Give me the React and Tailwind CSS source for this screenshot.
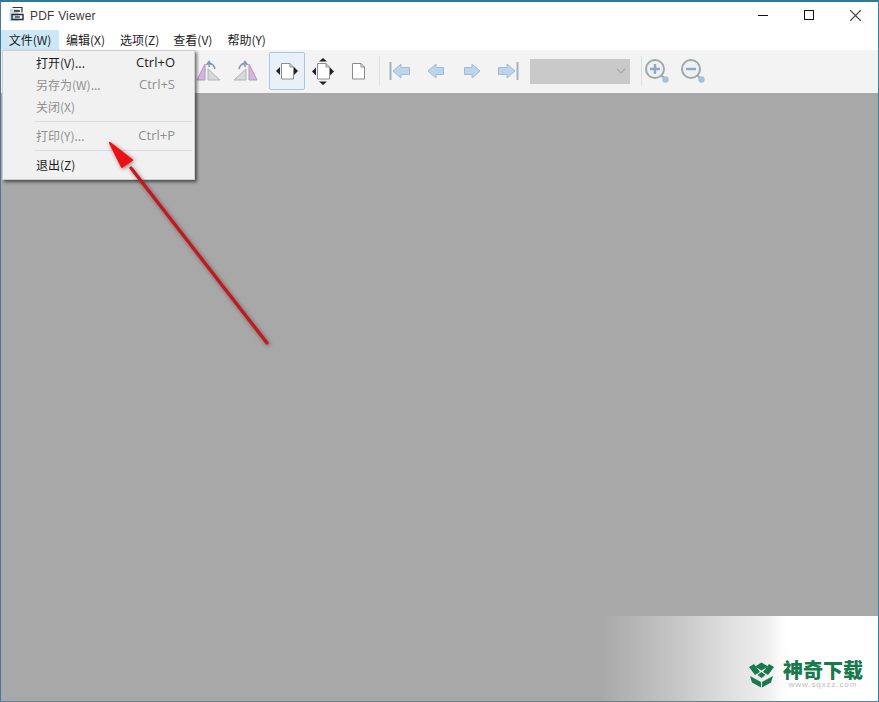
const FONT = "font-['Microsoft_YaHei','Noto_Sans_CJK_SC','Noto_Sans',sans-serif]";

function Sep() {
  return <div className="w-px h-[30px] bg-[#e0e0e0] shrink-0" />;
}

function Btn({ children, active, className = "" }) {
  return (
    <div className={`w-9 h-[38px] shrink-0 flex items-center justify-center rounded-[2px] border ${active ? "border-[#a9c6e4] bg-[#e8f0f8]" : "border-transparent"} ${className}`}>
      {children}
    </div>
  );
}

const Page = ({ x = 0, y = 0 }) => (
  <path d={`M${x + 0.5} ${y + 0.5}h8.5l3.5 3.5v12h-12z M${x + 9} ${y + 0.5}v3.5h3.5`} fill="#fff" stroke="#8c8c8c" strokeWidth="1" />
);

function FlipL() {
  return (
    <svg width="26" height="22" viewBox="0 0 26 22">
      <path d="M1 20 L9 4 V20Z" fill="#d4b6dd" stroke="#b594c4" />
      <path d="M12 20 V9 L24 20Z" fill="#d6d8d8" stroke="#b2b6b6" />
      <path d="M13 7 V3 M10.5 5 L13 1.5 L15.5 5 M13 3 q5 1 6 6" fill="none" stroke="#8498ac" strokeWidth="1.5" />
    </svg>
  );
}
function FlipR() {
  return (
    <svg width="26" height="22" viewBox="0 0 26 22">
      <path d="M25 20 L17 4 V20Z" fill="#d4b6dd" stroke="#b594c4" />
      <path d="M14 20 V9 L2 20Z" fill="#d6d8d8" stroke="#b2b6b6" />
      <path d="M13 7 V3 M10.5 5 L13 1.5 L15.5 5 M13 3 q-5 1 -6 6" fill="none" stroke="#8498ac" strokeWidth="1.5" />
    </svg>
  );
}
function FitW() {
  return (
    <svg width="22" height="18" viewBox="0 0 22 18">
      <g transform="translate(5 1)"><Page /></g>
      <path d="M4 5v8l-4-4zM18 5v8l4-4z" fill="#222" />
    </svg>
  );
}
function FitP() {
  return (
    <svg width="22" height="27" viewBox="0 0 22 27">
      <g transform="translate(5 5)"><Page /></g>
      <path d="M4 9.5v8l-4-4zM18 9.5v8l4-4zM7 3.5h8l-4-3.5zM7 23.5h8l-4 3.5z" fill="#222" />
    </svg>
  );
}
function ArrowNav({ dir }) {
  const flip = dir === "left" ? "" : "scale(-1 1) translate(-22 0)";
  return (
    <svg width="22" height="20" viewBox="0 0 22 20">
      <g transform={flip}>
        <rect x="0.5" y="1" width="2" height="18" fill="#a5b2c4" />
        <path d="M4 10 L12 3 V6.5 H20.5 V13.5 H12 V17Z" fill="#bcd5ee" stroke="#a6b9cf" />
      </g>
    </svg>
  );
}
function Nav({ dir }) {
  const flip = dir === "left" ? "" : "scale(-1 1) translate(-18 0)";
  return (
    <svg width="18" height="18" viewBox="0 0 18 18">
      <g transform={flip}>
        <path d="M1 9 L9 2 V5.5 H16.5 V12.5 H9 V16Z" fill="#bcd5ee" stroke="#a6b9cf" />
      </g>
    </svg>
  );
}
function Zoom({ plus }) {
  return (
    <svg width="26" height="26" viewBox="0 0 26 26">
      <circle cx="11" cy="11" r="9" fill="#eef1f3" stroke="#9fa9a8" strokeWidth="2" />
      <path d={plus ? "M6 11h10M11 6v10" : "M6 11h10"} stroke="#8fa7c4" strokeWidth="2.4" />
      <path d="M17 17l4 4" stroke="#9fa9a8" strokeWidth="2" />
      <circle cx="21.5" cy="21.5" r="3.2" fill="#a9bfd8" />
    </svg>
  );
}

function MenuItem({ label, shortcut, disabled }) {
  return (
    <div className={`h-[22px] flex items-center justify-between pl-[33px] pr-[19px] text-[12px] ${disabled ? "text-[#8f8f8f]" : "text-[#1c1c1c]"}`}>
      <span>{label}</span>
      {shortcut && <span className="text-[13px] font-['Open_Sans',sans-serif]">{shortcut}</span>}
    </div>
  );
}

function Divider() {
  return <div className="h-px bg-[#dcdcdc] ml-[32px] mr-[2px] my-[3px]" />;
}

export default function App() {
  return (
    <div className={`relative w-[879px] h-[702px] overflow-hidden bg-white border-x border-b border-t-2 border-x-[#3f7f9c] border-b-[#4f87a6] border-t-[#2f7a94] flex flex-col ${FONT}`}>
      <div className="h-[28px] shrink-0 flex items-center bg-white pl-[8px]">
        <svg width="16" height="16" viewBox="0 0 16 16" className="shrink-0 -mt-1">
          <rect x="0.5" y="3" width="9" height="12" fill="#c4dbe8" />
          <path d="M3.5 1.5H13V6.5" fill="none" stroke="#333" strokeWidth="1.2" />
          <path d="M5 5h6M3 8.5h11v5H3z" fill="none" stroke="#2a2a2a" strokeWidth="1.4" />
          <path d="M6 11h5" stroke="#2a2a2a" strokeWidth="1.2" />
        </svg>
        <span className="ml-[5px] text-[12px] text-[#3a3a3a] font-['Liberation_Sans',sans-serif] tracking-[0.2px]">PDF Viewer</span>
        <div className="ml-auto flex items-center">
          <div className="w-[46px] h-[28px] flex items-center justify-center -mt-[2px]">
            <div className="w-[10px] h-px bg-[#111]" />
          </div>
          <div className="w-[46px] h-[28px] flex items-center justify-center -mt-[2px]">
            <div className="w-[10px] h-[10px] border border-[#111]" />
          </div>
          <div className="w-[46px] h-[28px] flex items-center justify-center -mt-[2px]">
            <svg width="11" height="11" viewBox="0 0 11 11"><path d="M0 0l11 11M11 0L0 11" stroke="#333" strokeWidth="1.1" /></svg>
          </div>
        </div>
      </div>

      <div className="h-[20px] shrink-0 flex items-stretch bg-white text-[12px] text-[#222]">
        <div className="w-[58px] flex items-center justify-center bg-[#cce8f7]">文件(W)</div>
        <div className="ml-[7px] flex items-center">编辑(X)</div>
        <div className="ml-[15px] flex items-center">选项(Z)</div>
        <div className="ml-[14px] flex items-center">查看(V)</div>
        <div className="ml-[15px] flex items-center">帮助(Y)</div>
      </div>

      <div className="h-[43px] shrink-0 flex items-center bg-[#f3f3f3] pl-[190px] pb-[1px]">
        <Btn><FlipL /></Btn>
        <Btn><FlipR /></Btn>
        <Btn active className="ml-[6px]"><FitW /></Btn>
        <Btn><FitP /></Btn>
        <Btn>
          <svg width="14" height="17" viewBox="0 0 14 17"><Page /></svg>
        </Btn>
        <div className="w-[2px]" />
        <Sep />
        <div className="w-[2px]" />
        <Btn><ArrowNav dir="left" /></Btn>
        <Btn><Nav dir="left" /></Btn>
        <Btn><Nav dir="right" /></Btn>
        <Btn><ArrowNav dir="right" /></Btn>
        <div className="ml-[4px] w-[100px] h-[25px] bg-[#c9c9c9] flex items-center justify-end pr-[4px] shrink-0">
          <svg width="10" height="6" viewBox="0 0 10 6"><path d="M1 1l4 4 4-4" fill="none" stroke="#a8a8a8" strokeWidth="1.2" /></svg>
        </div>
        <div className="w-[11px]" />
        <Sep />
        <Btn className="-ml-[3px]"><Zoom plus /></Btn>
        <Btn><Zoom /></Btn>
      </div>

      <div className="flex-1 bg-[#a8a8a8]" />

      <div className="absolute left-[1px] top-[48px] w-[193px] h-[130px] bg-[#f1f1f1] border border-[#cfcfcf] shadow-[2px_2px_3px_rgba(0,0,0,0.55)] pt-[1px]">
        <MenuItem label="打开(V)..." shortcut="Ctrl+O" />
        <MenuItem label="另存为(W)..." shortcut="Ctrl+S" disabled />
        <MenuItem label="关闭(X)" disabled />
        <Divider />
        <MenuItem label="打印(Y)..." shortcut="Ctrl+P" disabled />
        <Divider />
        <MenuItem label="退出(Z)" />
      </div>

      <svg className="absolute left-[100px] top-[130px]" width="180" height="220" viewBox="0 0 180 220" style={{ filter: "drop-shadow(1px 1px 2px rgba(90,20,20,0.6))" }}>
        <path d="M166 211 L30 36" stroke="#bf1a20" strokeWidth="3.2" strokeLinecap="round" />
        <path d="M9 11 L31 28 L21 35 Z" fill="#ee0f16" stroke="#ee0f16" strokeWidth="2" strokeLinejoin="round" />
      </svg>

      <div className="absolute right-0 bottom-0 w-[278px] h-[85px] bg-[linear-gradient(to_right,#a8a8a8_0%,#c8c8c8_29%,#e0e0e0_47%,#eeeeee_60%,#f6f6f6_63%,#ffffff_67%)] flex justify-end items-end pr-[15px] pb-[12px]">
        <div className="flex items-center gap-[8px]">
          <svg width="27" height="26" viewBox="0 0 27 26">
            <path d="M13.5 0.5L20 4.5 13.5 8.5 7 4.5z" fill="#187a4c" />
            <path d="M1 5l5-3 6 8-5 3zM26 5l-5-3-6 8 5 3z" fill="#187a4c" />
            <path d="M13.5 10l4 3-4 3-4-3z" fill="#187a4c" />
            <path d="M2 14l11 6v5.5L4 20.5zM25 14l-11 6v5.5l9-5z" fill="#187a4c" />
          </svg>
          <div className="flex flex-col items-center">
            <span className="text-[20px] leading-[20px] font-black text-[#187a4c] font-['Noto_Sans_CJK_SC',sans-serif]">神奇下载</span>
            <span className="text-[8px] leading-[9px] text-[#bdbdbd] font-['Liberation_Sans',sans-serif] tracking-[0.9px]">www.sqxzz.com</span>
          </div>
        </div>
      </div>
    </div>
  );
}
